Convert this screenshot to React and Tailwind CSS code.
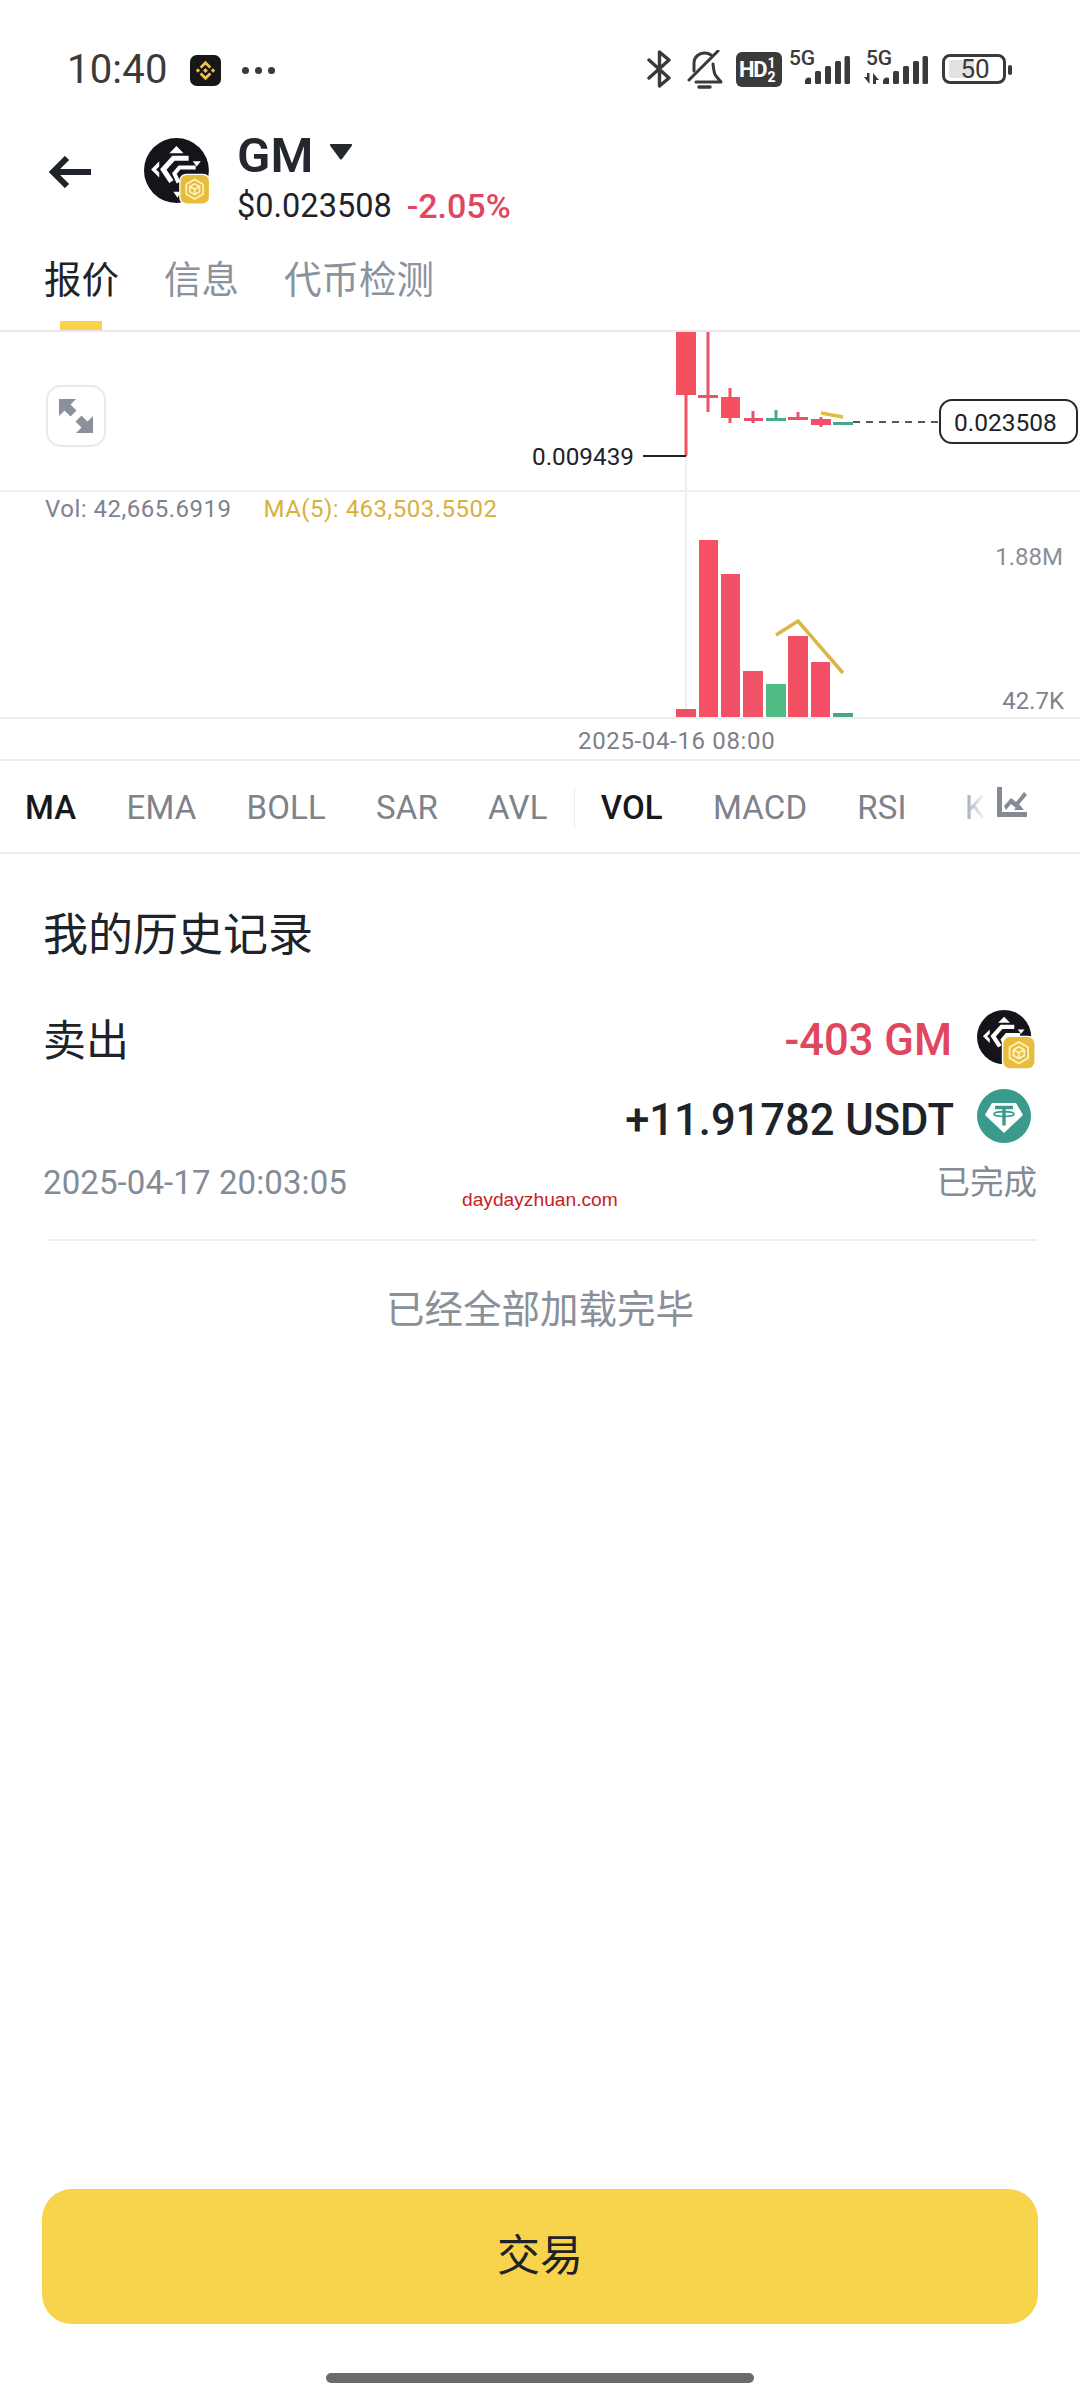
import React from 'react';

const candles = [
  { x: 676, w: 20, top: 331, bottom: 395, wickX: 686, wickTop: 395, wickBottom: 456, color: '#f5505f' },
  { x: 698, w: 20, top: 395, bottom: 398, wickX: 708, wickTop: 331, wickBottom: 412, color: '#e9566c' },
  { x: 721, w: 19, top: 397, bottom: 418, wickX: 730, wickTop: 388, wickBottom: 423, color: '#f5505f' },
  { x: 744, w: 19, top: 418, bottom: 421, wickX: 753, wickTop: 411, wickBottom: 423, color: '#e9506a' },
  { x: 766, w: 20, top: 418, bottom: 421, wickX: 776, wickTop: 410, wickBottom: 421, color: '#48ad84' },
  { x: 788, w: 20, top: 417, bottom: 420, wickX: 798, wickTop: 412, wickBottom: 420, color: '#e9506a' },
  { x: 811, w: 20, top: 419, bottom: 425, wickX: 821, wickTop: 417, wickBottom: 427, color: '#f0506a' },
  { x: 833, w: 20, top: 422, bottom: 425, wickX: 843, wickTop: 422, wickBottom: 425, color: '#4aa587' },
];

const volumes = [
  { x: 676, w: 20, top: 709, color: '#ee4f62' },
  { x: 699, w: 19, top: 540, color: '#f65062' },
  { x: 721, w: 19, top: 574, color: '#f05068' },
  { x: 743, w: 20, top: 671, color: '#f05466' },
  { x: 766, w: 20, top: 684, color: '#4fbb85' },
  { x: 788, w: 20, top: 636, color: '#f14f62' },
  { x: 811, w: 19, top: 662, color: '#f44f66' },
  { x: 833, w: 20, top: 713, color: '#4fa487' },
];

const indicatorsLeft = ['MA', 'EMA', 'BOLL', 'SAR', 'AVL'];
const indicatorsRight = ['VOL', 'MACD', 'RSI'];

function BinanceIcon() {
  return (
    <svg width="31" height="31" viewBox="0 0 32 32">
      <rect width="32" height="32" rx="7" fill="#17171a" />
      <g fill="#f0c445">
        <path d="M16 6l6 6-2 2-4-4-4 4-2-2z" />
        <path d="M16 26l6-6-2-2-4 4-4-4-2 2z" />
        <path d="M16 13.500l2.500 2.500-2.500 2.500-2.500-2.500z" />
        <path d="M8.200 13.800l2.200 2.200-2.200 2.200L6 16z" />
        <path d="M23.800 13.800L26 16l-2.200 2.200-2.200-2.200z" />
      </g>
    </svg>
  );
}

// badge is given in the icon's 72 unit box: translate + scale of a 32 unit square
function GmIcon({ className, badge }) {
  return (
    <svg className={className} viewBox="0 0 72 72">
      <circle cx="32" cy="32" r="32" fill="#14141a" />
      <path d="M25 15l7-7 7 7z" fill="#fff" />
      <path d="M7 31l8-8v5l-3 3 3 3v5z" fill="#fff" />
      <path d="M44 20H29L19 31l8 12" fill="none" stroke="#fff" strokeWidth="5" />
      <path d="M34 44l-4-9 5-6h16" fill="none" stroke="#fff" strokeWidth="4" />
      <path d="M48 23h8l-4 5z" fill="#fff" />
      <path d="M29 53h8l-4 6z" fill="#fff" />
      <g transform={badge}>
        <rect x="-1.500" y="-1.500" width="35" height="35" rx="8" fill="#fff" />
        <rect width="32" height="32" rx="7" fill="#e9bd3c" />
        <g fill="none" stroke="#fdf3c4" strokeWidth="1.800" strokeLinejoin="round">
          <path d="M16 5l9.500 5.500v11L16 27l-9.500-5.500v-11z" />
          <path d="M10.500 13l5.500-3 5.500 3v6l-5.500 3-5.500-3z" />
          <path d="M10.500 13l5.500 3 5.500-3M16 16v6" />
        </g>
      </g>
    </svg>
  );
}

function TetherIcon() {
  return (
    <svg width="54" height="54" viewBox="0 0 54 54">
      <circle cx="27" cy="27" r="27" fill="#3a9a8c" />
      <path d="M15 14h24l7 12-19 18L8 26z" fill="#fff" />
      <g fill="none" stroke="#3a9a8c">
        <path d="M18 18.500h18M27 18.500v18" strokeWidth="3.400" />
        <ellipse cx="27" cy="25" rx="10" ry="2.400" strokeWidth="1.600" />
      </g>
    </svg>
  );
}

function SignalBars({ className }) {
  return (
    <svg className={className} width="45" height="28" viewBox="0 0 45 28" fill="#3a3a3a">
      <path d="M0 28v-3a4 4 0 0 1 6-3v6z" />
      <rect x="10" y="15" width="6" height="13" rx="1.500" />
      <rect x="20" y="10" width="6" height="18" rx="1.500" />
      <rect x="30" y="5" width="6" height="23" rx="1.500" />
      <rect x="39.500" y="0" width="5.500" height="28" rx="1.500" />
    </svg>
  );
}

function StatusBar() {
  return (
    <div className="flex h-[130px] pl-[67px] pr-[68px] pt-[50px] items-start text-[#3a3a3a]">
      <span className="text-[40px] leading-[40px] tracking-[0.2px]">10:40</span>
      <span className="ml-[22px] mt-[5px]"><BinanceIcon /></span>
      <span className="ml-[21px] mt-[17px] flex gap-[6px]">
        <i className="w-[7px] h-[7px] rounded-full bg-[#3a3a3a]" />
        <i className="w-[7px] h-[7px] rounded-full bg-[#3a3a3a]" />
        <i className="w-[7px] h-[7px] rounded-full bg-[#3a3a3a]" />
      </span>

      <div className="ml-auto flex items-start">
        <svg width="24" height="38" viewBox="0 0 24 38" fill="none" stroke="#3a3a3a" strokeWidth="3.400" strokeLinecap="round" strokeLinejoin="round">
          <path d="M2 10l20 18-9.500 8V2L22 10 2 28" />
        </svg>
        <svg className="ml-[16px]" width="36" height="39" viewBox="0 0 36 39" fill="none" stroke="#3a3a3a" strokeWidth="3" strokeLinecap="round" strokeLinejoin="round">
          <path d="M2 30L31 1" />
          <path d="M7 21V13C7 7 12 3 18 3c2 0 4 .5 6 2" />
          <path d="M26 14c.5 5 1 10 3 12l5 6H9" />
          <path d="M12 37h11" strokeWidth="3.400" />
        </svg>
        <div className="ml-[13px] mt-[2px] w-[46px] h-[35px] rounded-[6px] bg-[#3a3a3a] text-white flex items-center pl-[3px] font-bold">
          <span className="text-[22px] leading-none tracking-[-1.2px]">HD</span>
          <span className="flex flex-col text-[14px] leading-[14px] ml-[1px]">
            <span>1</span>
            <span>2</span>
          </span>
        </div>
        <div className="relative ml-[7px] w-[61px] h-[34px]">
          <span className="absolute left-0 top-0 text-[21px] leading-[17px] font-medium tracking-[-0.3px]">5G</span>
          <SignalBars className="absolute left-[16px] top-[6px]" />
        </div>
        <div className="relative ml-[14px] w-[64px] h-[34px]">
          <span className="absolute left-[2px] top-0 text-[21px] leading-[17px] font-medium tracking-[-0.3px]">5G</span>
          <svg className="absolute left-0 top-[23px]" width="15" height="11" viewBox="0 0 15 11" fill="#3a3a3a">
            <path d="M0 4h3V0h2.500v11zM9 11V0l6 7h-3v4z" />
          </svg>
          <SignalBars className="absolute left-[19px] top-[6px]" />
        </div>
        <div className="relative ml-[14px] mt-[4px] w-[64px] h-[30px] rounded-[8px] border-[3px] border-[#3a3a3a]">
          <div className="absolute left-[4px] top-[3px] bottom-[3px] w-[25px] rounded-[2px] bg-[#e2e2e2]" />
          <span className="absolute inset-0 flex items-center justify-center text-[26px] leading-none pl-[2px]">50</span>
        </div>
        <div className="ml-[2px] mt-[15px] w-[4px] h-[10px] rounded-[2px] bg-[#3a3a3a]" />
      </div>
    </div>
  );
}

function Header() {
  return (
    <div className="flex h-[120px] items-start">
      <svg className="ml-[49px] mt-[26px]" width="42" height="32" viewBox="0 0 42 32" fill="none" stroke="#1e2329" strokeWidth="6">
        <path d="M42 16H4M18 2L4 16l14 14" />
      </svg>
      <GmIcon className="ml-[53px] mt-[8px] w-[73px] h-[73px]" badge="translate(36 36.500) scale(0.875)" />
      <div className="ml-[20px]">
        <div className="flex items-start h-[58px]">
          <span className="text-[49px] leading-[52px] font-semibold text-[#24272e]">GM</span>
          <svg className="ml-[17px] mt-[14px]" width="22" height="16" viewBox="0 0 22 16" fill="#24272e">
            <path d="M1 0h20a1 1 0 0 1 1 1.500L12 15a1.400 1.400 0 0 1-2 0L0 1.500A1 1 0 0 1 1 0z" />
          </svg>
        </div>
        <div className="flex items-center h-[32px] mt-[2px] leading-none">
          <span className="text-[32.500px] text-[#1e2329]">$0.023508</span>
          <span className="ml-[15px] text-[34px] font-medium text-[#e0475f]">-2.05%</span>
        </div>
      </div>
    </div>
  );
}

function Tabs() {
  return (
    <div className="flex h-[82px] border-b-2 border-[#e9e9ea] pl-[44px] gap-[45px] text-[37.500px] leading-[60px] text-[#8a929e]">
      <div className="relative h-[80px] text-[#1e2329]">
        报价
        <div className="absolute left-[16px] bottom-0 w-[42px] h-[9px] bg-[#f7d24a]" />
      </div>
      <div>信息</div>
      <div>代币检测</div>
    </div>
  );
}

function Chart() {
  return (
    <div className="relative h-[427px]">
      <svg className="absolute inset-0" width="1080" height="427" viewBox="0 332 1080 427">
        <line x1="686" y1="456" x2="686" y2="717" stroke="#e8e8ea" strokeWidth="1.500" />
        {candles.map((c, i) => (
          <g key={i} fill={c.color}>
            <rect x={c.wickX - 1.5} y={c.wickTop} width="3" height={c.wickBottom - c.wickTop} />
            <rect x={c.x} y={c.top} width={c.w} height={c.bottom - c.top} />
          </g>
        ))}
        <path d="M821 413L843 417" stroke="#dfc03c" strokeWidth="3.500" />
        <path d="M853 422H938" stroke="#222" strokeWidth="1.500" strokeDasharray="7 6" />
        <path d="M643 456H686" stroke="#222" strokeWidth="1.800" />
        {volumes.map((v, i) => (
          <rect key={i} x={v.x} y={v.top} width={v.w} height={717 - v.top} fill={v.color} />
        ))}
        <path d="M776 635L798 621L843 673" fill="none" stroke="#dcb544" strokeWidth="3.500" />
      </svg>

      <div className="relative h-[160px] pt-[53px] pl-[46px] border-b-2 border-[#efeff0]">
        <button className="w-[60px] h-[62px] rounded-[15px] border-2 border-[#e9e9e9] bg-white flex items-center justify-center">
          <svg width="34" height="34" viewBox="0 0 34 34" fill="#8b919c">
            <path d="M0 0h17l-5.500 5.500 6 6-6 6-6-6L0 17z" />
            <path d="M34 34H17l5.500-5.500-6-6 6-6 6 6L34 17z" />
          </svg>
        </button>
        <span className="absolute left-[532px] top-[111px] text-[24.300px] leading-[28px] text-[#1e2329]">0.009439</span>
        <span className="absolute left-[939px] top-[67px] w-[139px] h-[45px] rounded-[13px] border-2 border-[#26282c] bg-white pl-[13px] text-[24.500px] leading-[43px] text-[#1e2329]">0.023508</span>
      </div>

      <div className="relative h-[225px]">
        <div className="flex pl-[45px] pt-[2px] gap-[32px] text-[24px] leading-[30px] tracking-[0.5px]">
          <span className="text-[#7d838d]">Vol: 42,665.6919</span>
          <span className="text-[#d9b040]">MA(5): 463,503.5502</span>
        </div>
        <span className="absolute right-[17px] top-[51px] text-[24px] leading-[28px] text-[#8a8f98]">1.88M</span>
        <span className="absolute right-[16px] top-[195px] text-[24px] leading-[28px] text-[#7d838d]">42.7K</span>
      </div>

      <div className="relative h-[42px] border-t-2 border-[#efeff0] pl-[578px] pt-[7px] text-[24px] leading-[30px] text-[#7d8088] tracking-[0.65px]">
        2025-04-16 08:00
      </div>
    </div>
  );
}

function Indicators() {
  return (
    <div className="relative h-[95px] border-y-2 border-[#ececed] overflow-hidden">
      <div className="flex items-center h-full pl-[25px] pt-[2px] gap-[50px] text-[33px] tracking-[0.2px] text-[#7d828b] whitespace-nowrap">
        {indicatorsLeft.map((name, i) => (
          <span key={name} className={i === 0 ? 'text-[#17181c] font-medium' : ''}>{name}</span>
        ))}
        <span className="w-[1px] h-[40px] bg-[#ececed] -mx-[24px]" />
        {indicatorsRight.map((name, i) => (
          <span key={name} className={i === 0 ? 'text-[#17181c] font-medium' : ''}>{name}</span>
        ))}
        <span className="ml-[8px]">KDJ</span>
      </div>
      <div className="absolute right-0 top-0 bottom-0 w-[115px] flex items-center bg-gradient-to-r from-white/30 via-white via-[18%] to-white">
        <svg className="ml-[32px] -mt-[10px]" width="30" height="30" viewBox="0 0 30 30" fill="#858b95">
          <path d="M0 0h5v25h25v5H0z" />
          <path d="M7 19l7-8 5 4 8-10 3 3-11 13-5-4-5 6z" />
          <path d="M17 23l5-6 5 6z" />
        </svg>
      </div>
    </div>
  );
}

function History() {
  return (
    <div className="pt-[54px] pl-[43px] pr-[43px]">
      <h2 className="text-[45px] leading-[56px] text-[#1e2329]">我的历史记录</h2>
      <div className="flex justify-between mt-[51px]">
        <span className="text-[43px] leading-[52px] text-[#1e2329]">卖出</span>
        <div className="flex flex-col items-end -mt-[5px]">
          <div className="flex items-center h-[54px] text-[43.500px] font-medium text-[#e0475f]">
            <span className="mt-[8px]">-403 GM</span>
            <GmIcon className="ml-[25px] -mr-[1px] self-start w-[61px] h-[61px]" badge="translate(31 32) scale(1.150)" />
          </div>
          <div className="flex items-center h-[54px] mt-[25px] text-[43.500px] font-medium text-[#1e2329]">
            <span className="mt-[10px]">+11.91782 USDT</span>
            <span className="ml-[23px] mr-[6px]"><TetherIcon /></span>
          </div>
        </div>
      </div>
      <div className="relative flex justify-between items-center h-[40px] mt-[20px] text-[#848b96]">
        <span className="text-[33px] leading-[40px] tracking-[0.1px]">2025-04-17 20:03:05</span>
        <span className="text-[33.500px] leading-[40px]">已完成</span>
        <span className="absolute left-[419px] top-[25px] font-['Liberation_Sans',sans-serif] text-[19.200px] leading-[24px] text-[#c8201f]">daydayzhuan.com</span>
      </div>
      <div className="mt-[36px] ml-[5px] border-t-2 border-[#efeff0]" />
      <p className="mt-[45px] text-center text-[38.500px] leading-[48px] text-[#8a9099]">已经全部加载完毕</p>
    </div>
  );
}

export default function App() {
  return (
    <div className="w-[1080px] h-[2400px] bg-white flex flex-col overflow-hidden font-[Roboto,'Noto_Sans_CJK_SC',sans-serif]">
      <StatusBar />
      <Header />
      <Tabs />
      <Chart />
      <Indicators />
      <History />

      <button className="mt-auto mx-[42px] h-[135px] rounded-[30px] bg-[#f8d44c] text-[43px] text-[#1e2329]">
        交易
      </button>
      <div className="self-center mt-[49px] mb-[17px] w-[428px] h-[10px] rounded-full bg-[#6b6b6b]" />
    </div>
  );
}
